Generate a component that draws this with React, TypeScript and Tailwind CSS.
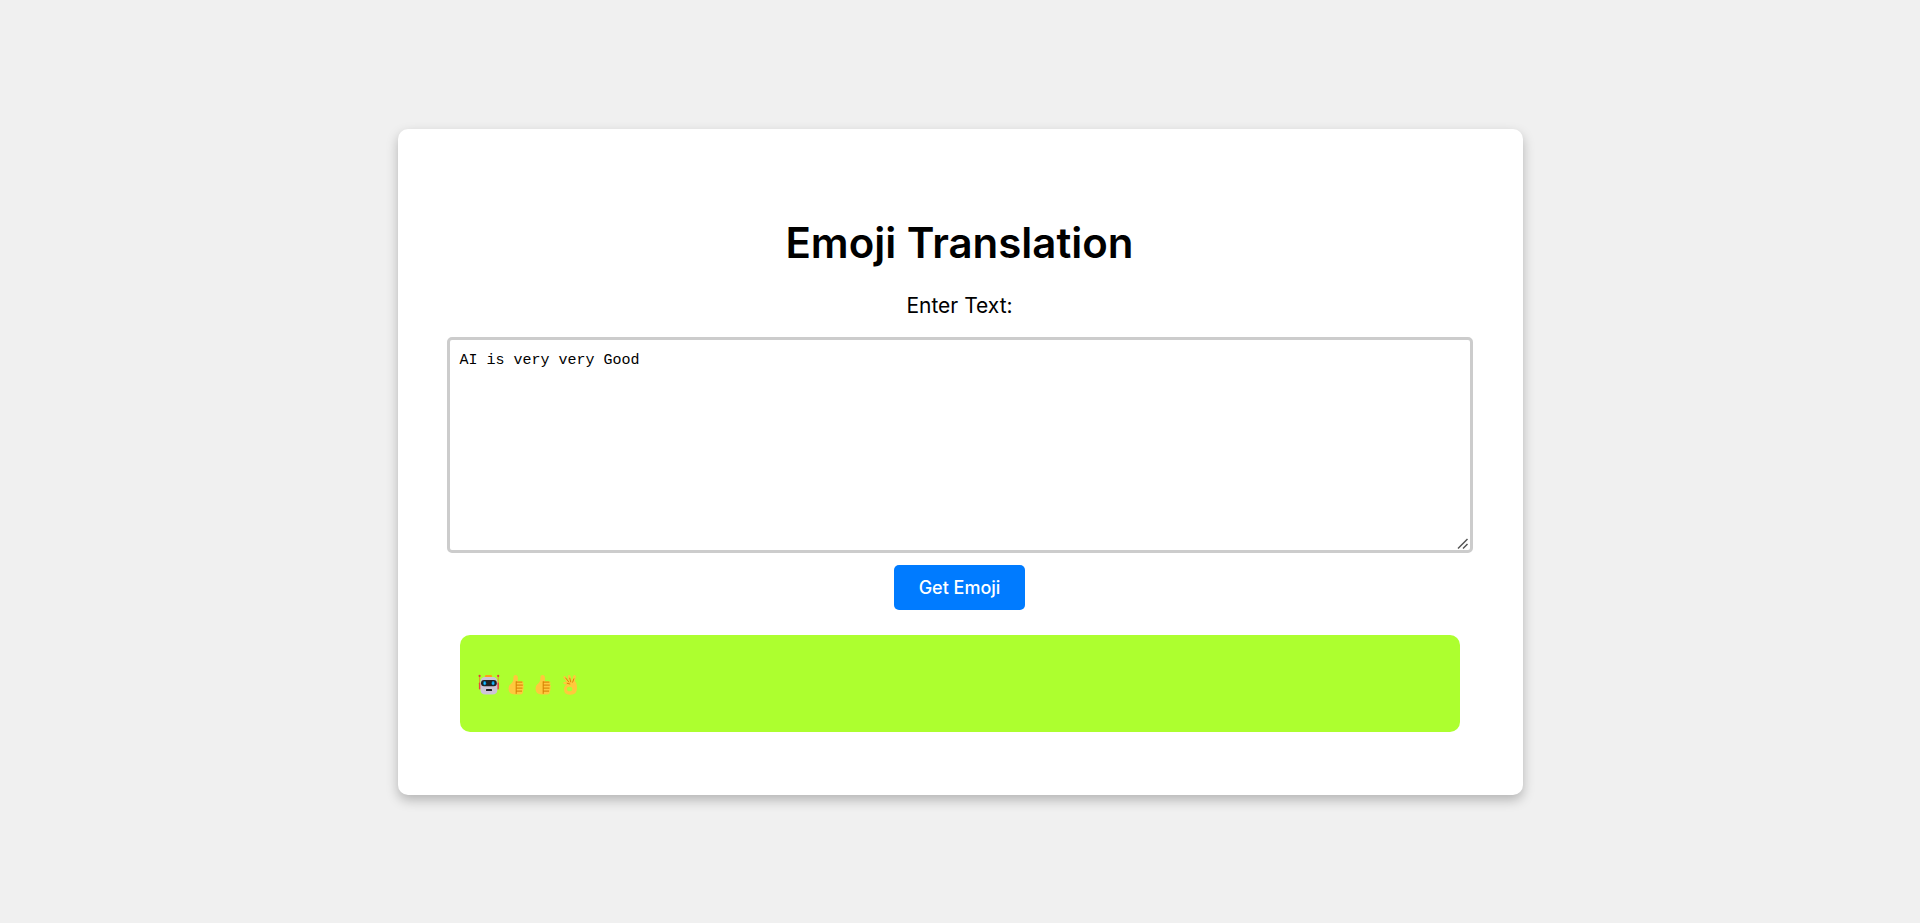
import { useState } from 'react';

function Robot() {
  return (
    <svg role="img" aria-label="robot" viewBox="0 0 22 22" className="h-[22px] w-[22px]">
      <path d="M7 3.2V2q0-1 1-1h5q1 0 1 1v1.2z" fill="#ff9f1a" />
      <path d="M1.6 2v9M20.2 2v9" stroke="#e0992b" strokeWidth="1" />
      <circle cx="1.6" cy="1.9" r="1.1" fill="#e8383d" />
      <circle cx="20.2" cy="1.9" r="1.1" fill="#e8383d" />
      <rect x="0.9" y="8.4" width="2" height="7" rx="0.9" fill="#e8483f" />
      <rect x="18.9" y="8.4" width="2" height="7" rx="0.9" fill="#e8483f" />
      <path d="M2.4 8q0-5 5-5h7q5 0 5 5v7.500q0 5-5 5h-7q-5 0-5-5z" fill="#cdc4d6" />
      <rect x="3" y="6" width="15.800" height="6.200" rx="3" fill="#212121" />
      <ellipse cx="6.700" cy="9.200" rx="1.500" ry="2.100" fill="#0084ce" />
      <ellipse cx="15.100" cy="9.200" rx="1.500" ry="2.100" fill="#0084ce" />
      <ellipse cx="6.700" cy="9.200" rx="0.700" ry="1.300" fill="#26c9fc" />
      <ellipse cx="15.100" cy="9.200" rx="0.700" ry="1.300" fill="#26c9fc" />
      <rect x="8" y="15" width="6" height="2" rx="0.500" fill="#212121" />
    </svg>
  );
}

function ThumbsUp() {
  return (
    <svg role="img" aria-label="thumbs up" viewBox="0 0 22 22" className="h-[22px] w-[22px]">
      <path
        d="M8.500 2.600q0-1.600 2-1.600 2.400 0 2.400 3v3.200h3.600q2 0 2 1.900 0 .9-.5 1.400.8.700.8 1.800 0 .9-.6 1.600.4.600.4 1.400 0 1.100-.8 1.700.1.400.1 1 0 2.400-2.600 2.400H9.500Q3.500 20.400 3.500 14.500q0-3 2.200-4.400 3-1.800 2.800-7.500z"
        fill="#ffc83d"
      />
      <path
        d="M11.200 7.300v12.500M11.200 8.100h6.200M11.200 11.100h6.600M11.200 14.100h6.300M11.200 17.100h5.800"
        stroke="#d67d00"
        strokeWidth="1"
        fill="none"
      />
    </svg>
  );
}

function OkHand() {
  return (
    <svg role="img" aria-label="OK hand" viewBox="0 0 22 22" className="h-[22px] w-[22px]">
      <path
        fillRule="evenodd"
        d="M4.600 2.500Q5.600 1.300 6.700 2.700L9.600 7 8.900 2.600Q8.800 1 10 .9q1.300-.1 1.600 1.400l1 4.600 1.700-4.700Q14.800.8 16 1.200q1.300.5.8 1.900L15.900 7q2 2 2 5v3q0 5.700-6.300 5.700Q5 20.700 5 15.200q0-3.600 3.300-4.700l-2.700-.2Q4.300 10 4.400 8.900q.2-1.200 1.500-1.100l1.700.1L4.500 3.800q-.5-.7.1-1.300zM10.600 12.700a2.700 2.300 0 1 0 0 4.600a2.700 2.300 0 1 0 0-4.600z"
        fill="#ffc83d"
      />
      <path d="M6.500 3.700l3.500 4.600M10.700 3.800l1.100 4.500M15 4.500l-1.500 4M7.800 9.200l3.400.9" stroke="#d67d00" strokeWidth="0.900" fill="none" />
    </svg>
  );
}

export default function App() {
  const [text, setText] = useState('AI is very very Good');
  return (
    <main className="flex min-h-screen items-center justify-center bg-[#f0f0f0] font-['Inter',sans-serif] text-black">
      <section className="flex w-full max-w-[1125px] flex-col items-center rounded-[10px] bg-white pr-[50px] pl-[49px] pt-[89px] pb-[63px] shadow-[0_5px_12px_rgba(0,0,0,0.25)]">
        <h1 className="text-[42px] leading-[50px] font-semibold">Emoji Translation</h1>
        <label htmlFor="source" className="mt-[26px] text-[21px] leading-6">
          Enter Text:
        </label>
        <div className="relative mt-[19px] w-full">
          <textarea
            id="source"
            value={text}
            onChange={(e) => setText(e.target.value)}
            spellCheck={false}
            className="block h-[216px] w-full resize-y rounded-[5px] border-[3px] border-[#ccc] bg-white px-[10px] py-[11px] font-['Liberation_Mono',monospace] text-[15px] leading-5 outline-none [&::-webkit-resizer]:bg-transparent"
          />
          <svg
            aria-hidden="true"
            viewBox="0 0 12 12"
            className="pointer-events-none absolute right-[4px] bottom-[3px] h-3 w-3"
          >
            <path d="M1 10.500L10.500 1M6 10.500L10.500 6" stroke="#555" strokeWidth="1.500" fill="none" />
          </svg>
        </div>
        <button type="button" className="mt-3 h-[45px] rounded-[5px] bg-[#007bff] px-[25px] text-[18px] font-medium text-white">
          Get Emoji
        </button>
        <div className="mt-[25px] w-full px-[13px]">
          <div className="flex h-[97px] items-center gap-[5px] rounded-[10px] bg-[#adff2f] px-[18px] pt-1">
            <Robot />
            <ThumbsUp />
            <ThumbsUp />
            <OkHand />
          </div>
        </div>
      </section>
    </main>
  );
}
